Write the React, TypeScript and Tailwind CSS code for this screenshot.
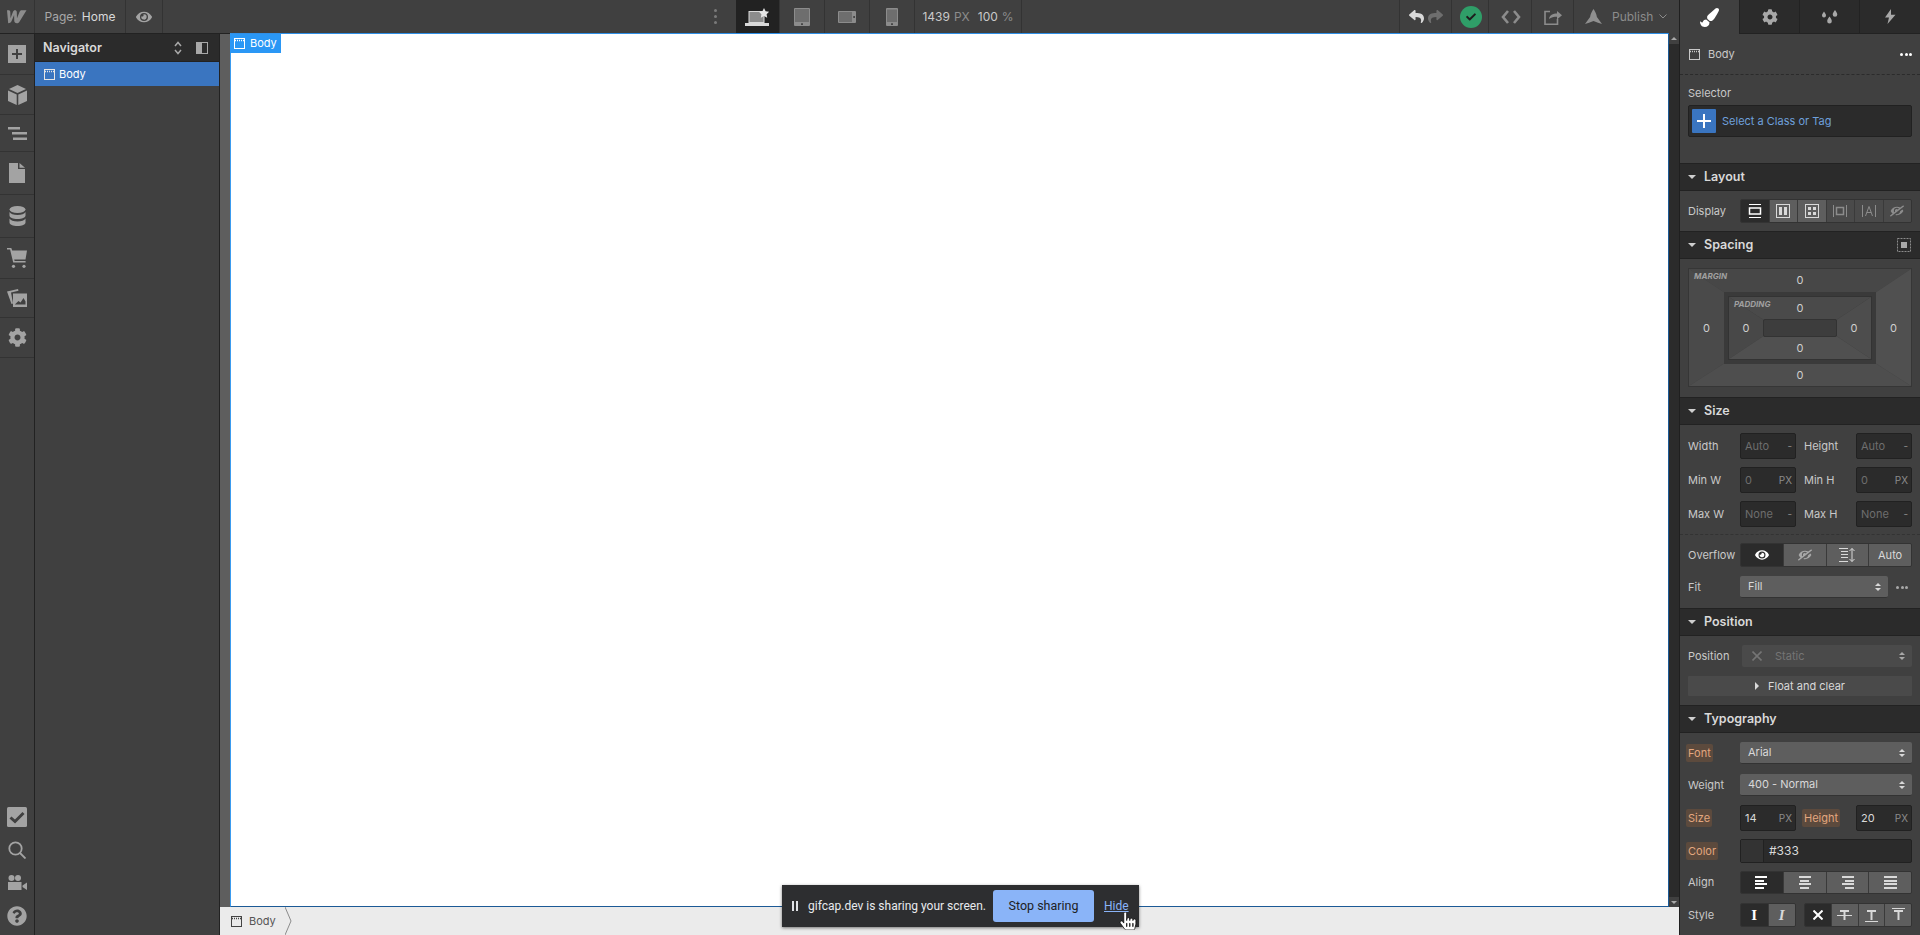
import { ReactNode } from "react";
import { FaCog, FaEye, FaEyeSlash, FaPaintBrush, FaReply, FaShare, FaCheck, FaQuestionCircle, FaHandPointer } from "react-icons/fa";

const font = "font-['Inter','Liberation_Sans',sans-serif]";

/* ---- small drawings ---- */

function WindowIcon({ className = "text-white" }: { className?: string }) {
  return (
    <svg width="11" height="11" viewBox="0 0 11 11" className={className} fill="none" stroke="currentColor">
      <rect x="0.5" y="0.5" width="10" height="10" />
      <path d="M1 2.5h9" strokeDasharray="1 1" strokeWidth="1.4" />
    </svg>
  );
}

function WLogo() {
  return (
    <svg width="20" height="15" viewBox="0 0 20 15" fill="#8c8c8c">
      <path d="M14.6 1.2c-1 0-1.6.7-2 1.600L10 9.300c0-1.400-.2-6.400-.2-6.400C9.700 1.900 9 1.200 8 1.200c-1 0-1.700.7-2 1.600L3.500 9.200 3.300 2.900c0-1-.8-1.700-1.900-1.700H0l1.200 13c1.600 0 2.700-.8 3.300-2l2.600-6.300.2 6.300c.1 1.200 1.400 2 2.400 2 1.500 0 2.500-.8 3.200-2.300L19.500 1.200h-4.900z" />
    </svg>
  );
}

function Dots({ color = "bg-white" }: { color?: string }) {
  return (
    <div className="flex gap-[1.5px]">
      {[0, 1, 2].map((i) => <div key={i} className={`w-[3px] h-[3px] rounded-full ${color}`} />)}
    </div>
  );
}

function RailIcon({ name }: { name: string }) {
  const c = "#a3a3a3";
  switch (name) {
    case "add":
      return (
        <svg width="18" height="18" viewBox="0 0 18 18">
          <rect width="18" height="18" fill={c} />
          <path d="M8 4h2v4h4v2h-4v4H8v-4H4V8h4z" fill="#404040" />
        </svg>
      );
    case "cube":
      return (
        <svg width="19" height="20" viewBox="0 0 19 20" fill={c}>
          <path d="M9.5 0l8.500 4-8.500 4L1 4zM0 5.500l8.700 4.100V20L0 16zM19 5.500V16l-8.700 4V9.600z" />
        </svg>
      );
    case "nav":
      return (
        <svg width="19" height="13" viewBox="0 0 19 13" fill={c}>
          <path d="M0 0h12v2.500H0zM4 5h15v2.500H4zM5 10.500h14V13H5z" />
        </svg>
      );
    case "page":
      return (
        <svg width="16" height="20" viewBox="0 0 16 20" fill={c}>
          <path d="M0 0h9v6h7v14H0zM10.500 0L16 4.800h-5.500z" />
        </svg>
      );
    case "db":
      return (
        <svg width="17" height="20" viewBox="0 0 17 20" fill={c}>
          <ellipse cx="8.5" cy="3.5" rx="8" ry="3.5" />
          <path d="M.5 6c1 2 4 3 8 3s7-1 8-3v3.500c0 2-3.500 3.500-8 3.500s-8-1.500-8-3.500z" />
          <path d="M.5 12.500c1 2 4 3 8 3s7-1 8-3v4c0 2-3.500 3.500-8 3.500s-8-1.500-8-3.500z" />
        </svg>
      );
    case "cart":
      return (
        <svg width="20" height="20" viewBox="0 0 20 20" fill={c}>
          <path d="M0 0h4.300l.9 2.500H20l-1.500 9H7.200l.4 1.500h11v1.600H6.200L3.100 1.600H0z" />
          <circle cx="6.5" cy="18.3" r="1.6" />
          <circle cx="17" cy="18.3" r="1.6" />
        </svg>
      );
    case "assets":
      return (
        <svg width="20" height="18" viewBox="0 0 20 18" fill={c}>
          <path d="M0 2.500L11 0l.5 1.800L4 3.500l2 11-1.500.4z" />
          <path fillRule="evenodd" d="M6 4.500h14V18H6zM7.800 15.500l3.700-3.500 2 1.500L16.500 9l2 3.500v3z" />
        </svg>
      );
    case "tasks":
      return (
        <svg width="20" height="20" viewBox="0 0 20 20">
          <rect width="20" height="20" rx="1.5" fill={c} />
          <path d="M3.500 10.500l4.500 4L16.500 6" stroke="#404040" strokeWidth="3" fill="none" />
        </svg>
      );
    case "search":
      return (
        <svg width="18" height="18" viewBox="0 0 18 18" fill="none" stroke={c} strokeWidth="1.8">
          <circle cx="7.5" cy="7.5" r="6.2" />
          <path d="M12 12l5.500 5.500" />
        </svg>
      );
    case "video":
      return (
        <svg width="20" height="15" viewBox="0 0 20 15" fill={c}>
          <circle cx="4.5" cy="3" r="3" />
          <circle cx="11" cy="3" r="3" />
          <path d="M1 7h13.500v8H1zM15.500 10.500l4.500-3V15l-4.500-3z" />
        </svg>
      );
    default:
      return null;
  }
}

function Rocket() {
  return (
    <svg width="17" height="15" viewBox="0 0 17 15" fill="#8f8f8f">
      <path d="M8.500 0c1.500 2 3 5 3.400 8l5.100 7-4-1.300-4.500-1.700-4.500 1.700-4 1.300L5.100 8C5.500 5 7 2 8.500 0z" />
    </svg>
  );
}

function Drops() {
  return (
    <svg width="17" height="14" viewBox="0 0 17 14" fill="#a8a8a8">
      <path d="M3 1.500C4.200 3.200 5 4.200 5 5.500a2 2 0 01-4 0c0-1.300.8-2.300 2-4zM14 0c1.300 1.900 2.300 3.100 2.300 4.500a2.300 2.300 0 01-4.600 0c0-1.400 1-2.600 2.300-4.500zM8.500 6.500c1.300 1.900 2.300 3.100 2.300 4.700a2.300 2.300 0 01-4.600 0c0-1.600 1-2.800 2.300-4.700z" />
    </svg>
  );
}

function SlashedEye({ className = "" }: { className?: string }) {
  return <FaEyeSlash size={14} className={`-scale-x-100 ${className}`} />;
}

function DisplayIcon({ name }: { name: string }) {
  const base = { width: 14, height: 14, viewBox: "0 0 14 14", fill: "none", stroke: "currentColor" } as const;
  switch (name) {
    case "block":
      return (
        <svg {...base}>
          <path d="M1 .5h12M1 13.500h12" />
          <rect x="1.5" y="4" width="11" height="6" strokeWidth="1.5" />
        </svg>
      );
    case "flex":
      return (
        <svg {...base}>
          <rect x=".5" y=".5" width="13" height="13" />
          <path d="M3 3h3v8H3zM8 3h3v8H8z" fill="currentColor" stroke="none" />
        </svg>
      );
    case "grid":
      return (
        <svg {...base}>
          <rect x=".5" y=".5" width="13" height="13" />
          <path d="M3 3h3v3H3zM8 3h3v3H8zM3 8h3v3H3zM8 8h3v3H8z" fill="currentColor" stroke="none" />
        </svg>
      );
    case "inline":
      return (
        <svg {...base}>
          <path d="M.5 1v12M13.500 1v12" />
          <rect x="3.5" y="3.5" width="7" height="7" strokeWidth="1.5" />
        </svg>
      );
    case "text":
      return (
        <svg {...base}>
          <path d="M.5 1v12M13.500 1v12" />
          <path d="M3.500 12L7 2.500 10.500 12M4.800 8.500h4.400" />
        </svg>
      );
    default:
      return <SlashedEye />;
  }
}

function DecoIcon({ line }: { line: string }) {
  return (
    <svg width="15" height="14" viewBox="0 0 15 14" fill="none" stroke="currentColor">
      <path d="M3 3h9M7.500 3v9" strokeWidth="2" />
      <path d={line} strokeWidth="1.2" />
    </svg>
  );
}

function AlignIcon({ align = "items-start", widths }: { align?: string; widths: number[] }) {
  return (
    <div className={`flex flex-col gap-[1.5px] w-[13px] ${align}`}>
      {widths.map((w, i) => (
        <div key={i} className="h-[2px] bg-current" style={{ width: w }} />
      ))}
    </div>
  );
}

/* ---- panel parts ---- */

function SectionHeader({ title, right }: { title: string; right?: ReactNode }) {
  return (
    <div className="h-[28px] shrink-0 bg-[#2b2b2b] border-y border-[#222222] flex items-center pl-2 pr-[9px]">
      <div className="w-0 h-0 border-x-[4px] border-x-transparent border-t-[4px] border-t-[#cfcfcf]" />
      <span className="ml-2 pt-[1px] text-[12.5px] font-semibold text-[#d9d9d9]">{title}</span>
      {right && <div className="ml-auto flex">{right}</div>}
    </div>
  );
}

function Label({ children, w = "w-[52px]", changed }: { children: ReactNode; w?: string; changed?: boolean }) {
  return (
    <div className={`${w} shrink-0 flex items-center`}>
      <span className={changed ? "text-[#e3a77f] bg-[#5c4a3d] rounded-[2px] -ml-[2px] px-[2px] py-[1px]" : "text-[#c9c9c9]"}>{children}</span>
    </div>
  );
}

function NumField({ value, unit, dim }: { value: string; unit: string; dim?: boolean }) {
  return (
    <div className="w-[56px] h-[26px] bg-[#2b2b2b] border border-[#212121] rounded-[2px] flex items-center justify-between pl-[4px] pr-[3px]">
      <span className={dim ? "text-[#6e6e6e]" : "text-[#d9d9d9]"}>{value}</span>
      <span className="text-[#8c8c8c] text-[10px]">{unit}</span>
    </div>
  );
}

function Chevrons() {
  return (
    <div className="flex flex-col gap-[2px]">
      <div className="w-0 h-0 border-x-[3px] border-x-transparent border-b-[3px] border-b-current" />
      <div className="w-0 h-0 border-x-[3px] border-x-transparent border-t-[3px] border-t-current" />
    </div>
  );
}

function Select({ value, className = "" }: { value: string; className?: string }) {
  return (
    <div className={`h-[22px] bg-[#5e5e5e] border-b border-[#333333] rounded-[2px] flex items-center justify-between pl-2 pr-[7px] text-[#d9d9d9] ${className}`}>
      <span>{value}</span>
      <Chevrons />
    </div>
  );
}

function Seg({ on, children, className = "" }: { on?: boolean; children: ReactNode; className?: string }) {
  return (
    <div
      className={`flex-1 flex items-center justify-center border-r border-[#3a3a3a] last:border-r-0 ${
        on ? "bg-[#2b2b2b] text-white" : "bg-[#5e5e5e] text-[#d9d9d9]"
      } ${className}`}
    >
      {children}
    </div>
  );
}

function Row({ children, className = "" }: { children: ReactNode; className?: string }) {
  return <div className={`flex pl-2 pr-2 ${className}`}>{children}</div>;
}

function SpacingValue({ className = "" }: { className?: string }) {
  return <div className={`flex items-center justify-center text-[#cfcfcf] ${className}`}>0</div>;
}

function SpacingBox() {
  return (
    <div className="relative w-[224px] h-[119px] mx-2 mt-[9px] border border-[#363636] grid grid-cols-[35px_1fr_35px] grid-rows-[23px_1fr_22px]">
      <svg className="absolute inset-0 w-full h-full" viewBox="0 0 222 117" preserveAspectRatio="none">
        <polygon points="0,0 222,0 186,24 36,24" fill="#474747" />
        <polygon points="0,0 36,24 36,94 0,117" fill="#4a4a4a" />
        <polygon points="222,0 222,117 186,94 186,24" fill="#505050" />
        <polygon points="0,117 36,94 186,94 222,117" fill="#4e4e4e" />
      </svg>
      <span className="absolute left-[5px] top-[1px] text-[8px] italic font-bold text-[#a0a0a0]">MARGIN</span>
      <SpacingValue className="relative col-start-2" />
      <SpacingValue className="relative col-start-1 row-start-2" />
      <div className="relative col-start-2 row-start-2 bg-[#3a3a3a] p-1">
        <div className="relative h-full border border-[#333333] grid grid-cols-[34px_1fr_34px] grid-rows-[22px_1fr_22px]">
          <svg className="absolute inset-0 w-full h-full" viewBox="0 0 141 60" preserveAspectRatio="none">
            <polygon points="0,0 141,0 107,22 34,22" fill="#4a4a4a" />
            <polygon points="0,0 34,22 34,38 0,60" fill="#484848" />
            <polygon points="141,0 141,60 107,38 107,22" fill="#4d4d4d" />
            <polygon points="0,60 34,38 107,38 141,60" fill="#505050" />
          </svg>
          <span className="absolute left-[5px] top-[1px] text-[8px] italic font-bold text-[#a0a0a0]">PADDING</span>
          <SpacingValue className="relative col-start-2" />
          <SpacingValue className="relative col-start-1 row-start-2" />
          <div className="relative col-start-2 row-start-2 bg-[#3d3d3d] border border-[#333333] rounded-[2px]" />
          <SpacingValue className="relative col-start-3 row-start-2" />
          <SpacingValue className="relative col-start-2 row-start-3" />
        </div>
      </div>
      <SpacingValue className="relative col-start-3 row-start-2" />
      <SpacingValue className="relative col-start-2 row-start-3" />
    </div>
  );
}

function RightPanel() {
  return (
    <aside className="w-[241px] shrink-0 bg-[#404040] border-l border-[#1f1f1f] flex flex-col text-[11px] overflow-hidden">
      {/* tabs */}
      <div className="h-[34px] shrink-0 flex">
        <div className="w-[59px] flex items-center justify-center bg-[#404040] text-white">
          <FaPaintBrush size={19} />
        </div>
        <div className="w-[60px] flex items-center justify-center bg-[#2b2b2b] border-l border-b border-[#222222] text-[#a8a8a8]">
          <FaCog size={16} />
        </div>
        <div className="w-[60px] flex items-center justify-center bg-[#2b2b2b] border-l border-b border-[#222222]">
          <Drops />
        </div>
        <div className="flex-1 flex items-center justify-center bg-[#2b2b2b] border-l border-b border-[#222222]">
          <svg width="12" height="15" viewBox="0 0 12 15" fill="#a8a8a8">
            <path d="M7 0L1 8.500h4L3.500 15 11.500 5.800H7z" />
          </svg>
        </div>
      </div>

      {/* selected element */}
      <div className="h-[41px] shrink-0 border-b border-dashed border-[#2b2b2b] flex items-center pl-[9px] pr-2 text-[#c9c9c9]">
        <WindowIcon className="text-[#c9c9c9]" />
        <span className="ml-2">Body</span>
        <div className="ml-auto"><Dots /></div>
      </div>

      <div className="h-[88px] shrink-0 px-2 pt-[11px]">
        <div className="text-[#c9c9c9] leading-[14px]">Selector</div>
        <div className="mt-[5px] h-[32px] bg-[#2b2b2b] border border-[#212121] rounded-[2px] flex items-center pl-[3px]">
          <div className="w-[24px] h-[24px] bg-[#3a75c0] rounded-[1px] flex items-center justify-center">
            <svg width="14" height="14" viewBox="0 0 14 14" fill="white">
              <path d="M6 0h2v6h6v2H8v6H6V8H0V6h6z" />
            </svg>
          </div>
          <span className="ml-[6px] text-[#6ea0dc]">Select a Class or Tag</span>
        </div>
      </div>

      <SectionHeader title="Layout" />
      <Row className="h-[40px] shrink-0 items-center">
        <Label>Display</Label>
        <div className="w-[172px] h-[24px] flex border border-[#333333] rounded-[2px] overflow-hidden">
          <Seg on><DisplayIcon name="block" /></Seg>
          <Seg><DisplayIcon name="flex" /></Seg>
          <Seg><DisplayIcon name="grid" /></Seg>
          <Seg className="!bg-[#4a4a4a] !text-[#8c8c8c]"><DisplayIcon name="inline" /></Seg>
          <Seg className="!bg-[#4a4a4a] !text-[#8c8c8c]"><DisplayIcon name="text" /></Seg>
          <Seg className="!bg-[#4a4a4a] !text-[#8c8c8c]"><DisplayIcon name="none" /></Seg>
        </div>
      </Row>

      <SectionHeader
        title="Spacing"
        right={
          <svg width="14" height="14" viewBox="0 0 14 14" fill="none" stroke="#8c8c8c" strokeDasharray="2 1">
            <rect x=".5" y=".5" width="13" height="13" />
            <rect x="4" y="4" width="6" height="6" fill="#a8a8a8" stroke="none" />
          </svg>
        }
      />
      <div className="h-[138px] shrink-0"><SpacingBox /></div>

      <SectionHeader title="Size" />
      <div className="h-[110px] shrink-0 border-b border-dashed border-[#333333] pt-2 flex flex-col gap-2">
        <Row><Label>Width</Label><NumField value="Auto" unit="-" dim /><Label w="w-[60px] pl-2">Height</Label><NumField value="Auto" unit="-" dim /></Row>
        <Row><Label>Min W</Label><NumField value="0" unit="PX" dim /><Label w="w-[60px] pl-2">Min H</Label><NumField value="0" unit="PX" dim /></Row>
        <Row><Label>Max W</Label><NumField value="None" unit="-" dim /><Label w="w-[60px] pl-2">Max H</Label><NumField value="None" unit="-" dim /></Row>
      </div>

      <div className="h-[73px] shrink-0 pt-2">
        <Row className="h-[24px]">
          <Label>Overflow</Label>
          <div className="w-[172px] flex border border-[#333333] rounded-[2px] overflow-hidden">
            <Seg on><FaEye size={14} /></Seg>
            <Seg><SlashedEye className="text-[#a8a8a8]" /></Seg>
            <Seg>
              <svg width="16" height="14" viewBox="0 0 16 14" fill="none" stroke="currentColor">
                <path d="M0 .5h9M2 3.500h7M2 6.500h7M2 9.500h7M0 13.500h9M13 .5v13" />
                <path d="M10.500 3L13 .5 15.500 3M10.500 11L13 13.500 15.500 11" />
              </svg>
            </Seg>
            <Seg>Auto</Seg>
          </div>
        </Row>
        <Row className="h-[22px] mt-[9px] items-center">
          <Label>Fit</Label>
          <Select value="Fill" className="w-[148px]" />
          <div className="ml-2"><Dots color="bg-[#a8a8a8]" /></div>
        </Row>
      </div>

      <SectionHeader title="Position" />
      <div className="h-[69px] shrink-0 pt-[9px]">
        <Row className="h-[22px] items-center">
          <Label w="w-[54px]">Position</Label>
          <div className="flex-1 h-[22px] bg-[#4a4a4a] rounded-[2px] flex items-center pl-[10px] pr-[7px] text-[#757575]">
            <svg width="10" height="10" viewBox="0 0 10 10" stroke="#757575" strokeWidth="1.6"><path d="M.5.5l9 9M9.500.5l-9 9" /></svg>
            <span className="ml-[13px]">Static</span>
            <div className="ml-auto text-[#a8a8a8]"><Chevrons /></div>
          </div>
        </Row>
        <div className="mx-2 mt-[9px] h-[20px] bg-[#4a4a4a] rounded-[1px] flex items-center justify-center text-[#d9d9d9]">
          <div className="w-0 h-0 border-y-[4px] border-y-transparent border-l-[4px] border-l-[#d9d9d9] mr-[9px]" />
          Float and clear
        </div>
      </div>

      <SectionHeader title="Typography" />
      <div className="flex flex-col pt-[9px]">
        <Row className="items-center"><Label changed>Font</Label><Select value="Arial" className="flex-1" /></Row>
        <Row className="items-center mt-[10px]"><Label>Weight</Label><Select value="400 - Normal" className="flex-1" /></Row>
        <Row className="mt-[9px]"><Label changed>Size</Label><NumField value="14" unit="PX" /><Label changed w="w-[60px] pl-2">Height</Label><NumField value="20" unit="PX" /></Row>
        <Row className="mt-2">
          <Label changed>Color</Label>
          <div className="flex-1 h-[24px] bg-[#2b2b2b] border border-[#212121] rounded-[2px] flex items-center text-[#d9d9d9]">
            <div className="w-[23px] h-full bg-[#333333] border-r border-[#212121]" />
            <span className="ml-[5px] text-[12px]">#333</span>
          </div>
        </Row>
        <Row className="h-[23px] mt-2">
          <Label>Align</Label>
          <div className="w-[172px] flex border border-[#333333] rounded-[2px] overflow-hidden">
            <Seg on><AlignIcon widths={[12, 9, 12, 9]} /></Seg>
            <Seg><AlignIcon align="items-center" widths={[12, 9, 12, 9]} /></Seg>
            <Seg><AlignIcon align="items-end" widths={[12, 9, 12, 9]} /></Seg>
            <Seg><AlignIcon widths={[13, 13, 13, 13]} /></Seg>
          </div>
        </Row>
        <Row className="h-[24px] mt-[9px]">
          <Label>Style</Label>
          <div className="w-[56px] flex border border-[#333333] rounded-[2px] overflow-hidden text-[15px] font-['Liberation_Serif',serif] font-bold">
            <Seg on>I</Seg>
            <Seg className="italic">I</Seg>
          </div>
          <div className="ml-2 w-[108px] flex border border-[#333333] rounded-[2px] overflow-hidden">
            <Seg on>
              <svg width="10" height="10" viewBox="0 0 10 10" stroke="white" strokeWidth="2"><path d="M.5.5l9 9M9.500.5l-9 9" /></svg>
            </Seg>
            <Seg><DecoIcon line="M0 7.500h15" /></Seg>
            <Seg><DecoIcon line="M1 13.500h13" /></Seg>
            <Seg><DecoIcon line="M1 .5h13" /></Seg>
          </div>
        </Row>
      </div>
    </aside>
  );
}

/* ---- top bar ---- */

function Cell({ w, on, children, border = true }: { w: string; on?: boolean; children?: ReactNode; border?: boolean }) {
  return (
    <div className={`${w} h-full shrink-0 flex items-center justify-center ${border ? "border-r border-[#333333]" : ""} ${on ? "bg-[#222222]" : ""}`}>
      {children}
    </div>
  );
}

function Device({ kind }: { kind: "tablet" | "land" | "phone" }) {
  if (kind === "tablet")
    return (
      <svg width="16" height="18" viewBox="0 0 16 18">
        <rect width="16" height="18" rx="1" fill="#8c8c8c" />
        <rect x="1" y="1" width="14" height="13" fill="#6e6e6e" />
        <rect x="7" y="15.3" width="2" height="1.6" fill="#404040" />
      </svg>
    );
  if (kind === "land")
    return (
      <svg width="18" height="12" viewBox="0 0 18 12">
        <rect width="18" height="12" rx="1" fill="#8c8c8c" />
        <rect x="1" y="1" width="13" height="10" fill="#6e6e6e" />
        <rect x="15.3" y="5" width="1.6" height="2" fill="#404040" />
      </svg>
    );
  return (
    <svg width="12" height="18" viewBox="0 0 12 18">
      <rect width="12" height="18" rx="1" fill="#8c8c8c" />
      <rect x="1" y="1.5" width="10" height="12.5" fill="#6e6e6e" />
      <rect x="5" y="15.3" width="2" height="1.6" fill="#404040" />
    </svg>
  );
}

function TopBar() {
  return (
    <header className="h-[33px] shrink-0 bg-[#404040] flex items-center text-[12px] text-[#d9d9d9]">
      <div className="w-[35px] h-full flex items-center justify-center border-r border-[#333333]"><WLogo /></div>
      <Cell w="w-[91px]">
        <span className="text-[#a8a8a8]">Page:</span>
        <span className="ml-[5px]">Home</span>
      </Cell>
      <Cell w="w-[37px]"><FaEye size={16} className="text-[#a3a3a3]" /></Cell>

      <div className="w-[532px] shrink-0" />
      <Cell w="w-[41px]" border={false}>
        <div className="flex flex-col gap-[3px]">
          {[0, 1, 2].map((i) => <div key={i} className="w-[3px] h-[3px] rounded-full bg-[#7a7a7a]" />)}
        </div>
      </Cell>
      <Cell w="w-[44px]" on>
        <svg width="26" height="18" viewBox="0 0 26 18">
          <rect x="4" y="3.5" width="15" height="11" fill="#8c8c8c" stroke="#d9d9d9" />
          <rect x="0" y="15" width="24" height="3" fill="#d9d9d9" />
          <path d="M19 0l1.600 3.200 3.500.5-2.500 2.500.6 3.500L19 8.100l-3.200 1.600.6-3.500-2.500-2.500 3.500-.5z" fill="#e6e6e6" />
        </svg>
      </Cell>
      <Cell w="w-[45px]"><Device kind="tablet" /></Cell>
      <Cell w="w-[45px]"><Device kind="land" /></Cell>
      <Cell w="w-[45px]"><Device kind="phone" /></Cell>
      <Cell w="w-[107px]">
        <span className="text-[#c9c9c9]">1439</span>
        <span className="ml-1 text-[#8c8c8c]">PX</span>
        <span className="ml-2 text-[#c9c9c9]">100</span>
        <span className="ml-1 text-[#8c8c8c]">%</span>
      </Cell>

      <div className="flex-1 h-full border-r border-[#333333]" />
      <Cell w="w-[52px]">
        <FaReply size={15} className="text-[#d9d9d9]" />
        <FaShare size={15} className="text-[#6e6e6e] ml-1" />
      </Cell>
      <Cell w="w-[37px]">
        <div className="ml-[2px] w-[22px] h-[22px] rounded-full bg-[#2f9e68] flex items-center justify-center">
          <FaCheck size={10} className="text-[#1d1d1d]" />
        </div>
      </Cell>
      <Cell w="w-[43px]">
        <svg width="20" height="14" viewBox="0 0 20 14" fill="none" stroke="#8c8c8c" strokeWidth="2.6" className="ml-[2px]">
          <path d="M7 1L2 7l5 6M13 1l5 6-5 6" />
        </svg>
      </Cell>
      <Cell w="w-[42px]">
        <svg width="19" height="16" viewBox="0 0 19 16" fill="none" stroke="#8c8c8c" strokeWidth="1.6" className="ml-[1px]">
          <path d="M6 2.500H1V15.200h12.500V10" />
          <path d="M5 10c.5-4 4-5.500 8-5.500V2l5 4.200-5 4.200V7.700c-3 0-6 .5-8 2.300z" fill="#8c8c8c" stroke="none" />
        </svg>
      </Cell>
      <div className="w-[105px] h-full flex items-center pl-[11px]">
        <Rocket />
        <span className="ml-[10px] text-[#8c8c8c]">Publish</span>
        <svg width="8" height="5" viewBox="0 0 8 5" fill="none" stroke="#8c8c8c" className="ml-[6px]"><path d="M.5.5L4 4 7.500.5" /></svg>
      </div>
    </header>
  );
}

const railTop: [string, string][] = [
  ["add", "h-[41px]"],
  ["cube", "h-[40px]"],
  ["nav", "h-[37px]"],
  ["page", "h-[43px]"],
  ["db", "h-[43px]"],
  ["cart", "h-[41px]"],
  ["assets", "h-[39px]"],
  ["gear", "h-[40px]"],
];

function Rail() {
  return (
    <nav className="w-[35px] shrink-0 bg-[#404040] border-t border-r border-[#222222] flex flex-col">
      {railTop.map(([name, h]) => (
        <div key={name} className={`${h} shrink-0 flex items-center justify-center border-b border-[#333333]`}>
          {name === "gear" ? <FaCog size={19} className="text-[#a3a3a3]" /> : <RailIcon name={name} />}
        </div>
      ))}
      <div className="mt-auto pb-[3px]">
        <div className="h-[33px] flex items-center justify-center"><RailIcon name="tasks" /></div>
        <div className="h-[33px] flex items-center justify-center"><RailIcon name="search" /></div>
        <div className="h-[33px] flex items-center justify-center"><RailIcon name="video" /></div>
        <div className="h-[33px] flex items-center justify-center"><FaQuestionCircle size={20} className="text-[#a3a3a3]" /></div>
      </div>
    </nav>
  );
}

function Navigator() {
  return (
    <section className="w-[185px] shrink-0 bg-[#404040] border-t border-r border-[#222222] flex flex-col">
      <div className="h-[28px] shrink-0 bg-[#2b2b2b] border-b border-[#222222] flex items-center pl-2 pr-[11px]">
        <span className="pt-[1px] text-[12.5px] font-semibold text-[#d9d9d9]">Navigator</span>
        <div className="ml-auto text-[#a8a8a8]">
          <svg width="8" height="14" viewBox="0 0 8 14" fill="none" stroke="currentColor" strokeWidth="1.5">
            <path d="M1 5l3-3.500L7 5M1 9l3 3.500L7 9" />
          </svg>
        </div>
        <svg width="12" height="12" viewBox="0 0 12 12" className="ml-[14px]" fill="none" stroke="#a8a8a8">
          <rect x=".5" y=".5" width="11" height="11" />
          <rect width="6" height="12" fill="#a8a8a8" stroke="none" />
        </svg>
      </div>
      <div className="h-[24px] shrink-0 bg-[#3a75c0] flex items-center pl-[9px] text-[11px] text-white">
        <WindowIcon className="text-[#e6e6e6]" />
        <span className="ml-[4px]">Body</span>
      </div>
    </section>
  );
}

function Canvas() {
  return (
    <main className="flex-1 flex flex-col min-w-0">
      <div className="flex-1 flex min-h-0">
        <div className="w-[10px] shrink-0 bg-[#5e5e5e] border-t border-[#222222]" />
        <div className="relative flex-1 bg-white border-t border-l border-b border-r border-t-[#2f8fe6] border-l-[#3a9bef] border-b-[#1c5a96] border-r-[#1c5a96]">
          <div className="absolute -left-px top-0 h-[19px] w-[51px] bg-[#2a97f5] flex items-center pl-[4px] text-[11px] text-white">
            <WindowIcon />
            <span className="ml-[5px]">Body</span>
          </div>
        </div>
        <div className="w-[10px] shrink-0 bg-[#2b2b2b] flex flex-col items-center">
          <div className="w-full h-[11px] bg-[#404040] flex items-center justify-center">
            <div className="w-0 h-0 border-x-[3px] border-x-transparent border-b-[3px] border-b-[#a8a8a8]" />
          </div>
          <div className="mt-auto w-full h-[10px] bg-[#404040] flex items-center justify-center">
            <div className="w-0 h-0 border-x-[3px] border-x-transparent border-t-[3px] border-t-[#a8a8a8]" />
          </div>
        </div>
      </div>
      <div className="h-[28px] shrink-0 bg-[#ebebeb] flex items-center pl-[11px] text-[11px] text-[#555555]">
        <WindowIcon className="text-[#444444]" />
        <span className="ml-[7px]">Body</span>
        <svg width="7" height="28" viewBox="0 0 7 28" fill="none" stroke="#8c8c8c" className="ml-[9px]"><path d="M0 0l6 14-6 14" /></svg>
      </div>
    </main>
  );
}

function ShareToast() {
  return (
    <div className="absolute left-[782px] top-[885px] w-[357px] h-[42px] bg-[#2d2e30] shadow-[0_1px_3px_rgba(0,0,0,0.5)] flex items-center whitespace-nowrap text-[12px] text-[#e8eaed] font-['Roboto',sans-serif]">
      <div className="ml-[10px] flex gap-[2px]">
        <div className="w-[2px] h-[10px] bg-[#dfe1e5]" />
        <div className="w-[2px] h-[10px] bg-[#dfe1e5]" />
      </div>
      <span className="ml-[10px] w-[175px]">gifcap.dev is sharing your screen.</span>
      <div className="ml-[10px] w-[101px] h-[32px] rounded-[3px] bg-[#8ab4f8] flex items-center justify-center text-[12.5px] text-[#202124]">Stop sharing</div>
      <span className="ml-[10px] text-[#8ab4f8] underline">Hide</span>
      <FaHandPointer size={18} className="absolute left-[337px] top-[27px] text-white stroke-black [stroke-width:20px]" />
    </div>
  );
}

export default function App() {
  return (
    <div className={`relative w-[1920px] h-[935px] overflow-hidden flex bg-[#404040] ${font}`}>
      <div className="flex-1 min-w-0 flex flex-col">
        <TopBar />
        <div className="flex-1 flex min-h-0">
          <Rail />
          <Navigator />
          <Canvas />
        </div>
      </div>
      <RightPanel />
      <ShareToast />
    </div>
  );
}
